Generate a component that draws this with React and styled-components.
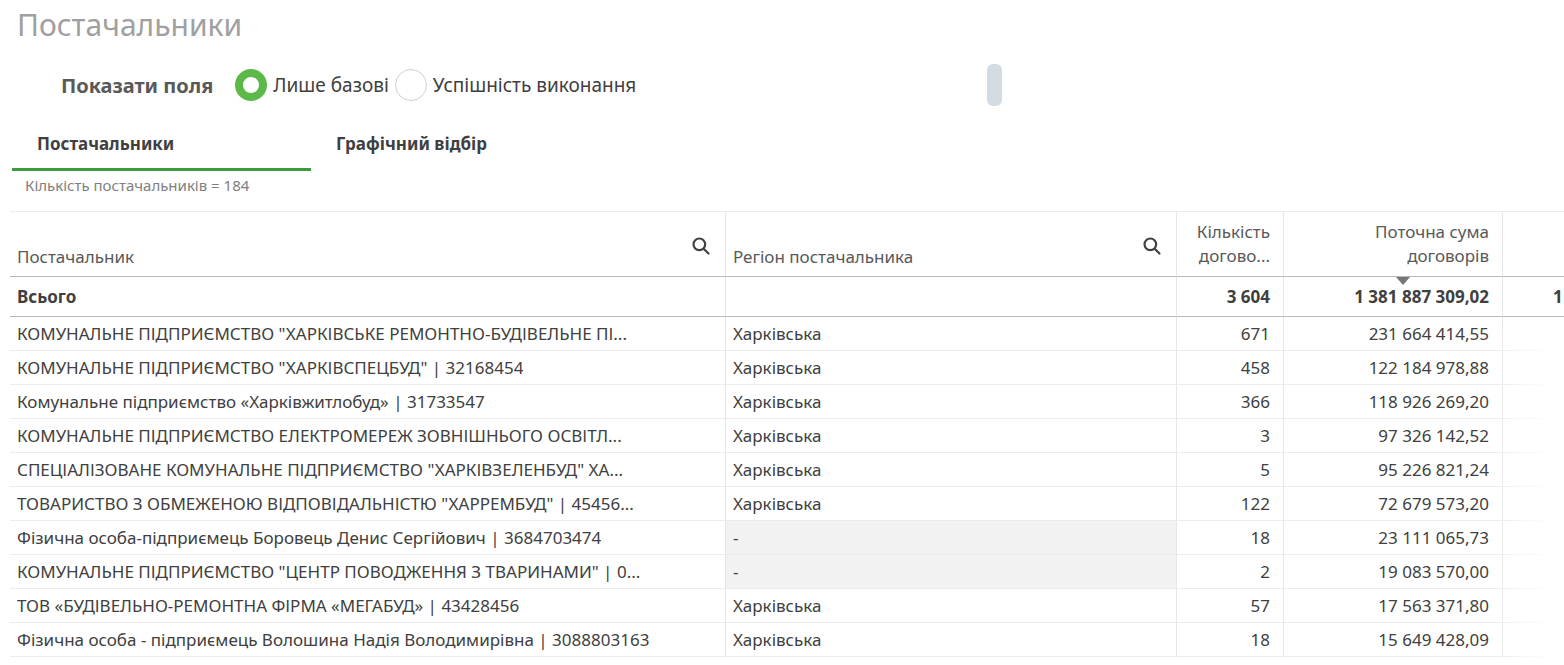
import React from "react";
import styled, { createGlobalStyle } from "styled-components";

const Global = createGlobalStyle`
  body { margin: 0; background: #fff; font-family: "Noto Sans", "Open Sans", sans-serif; color: #404040; overflow: hidden; }
`;

const Page = styled.div`
  width: 1564px;
  height: 665px;
  overflow: hidden;
  position: relative;
`;

const Title = styled.h1`
  margin: 0;
  padding: 4px 0 0 17px;
  font-size: 30px;
  font-weight: 400;
  color: #a0a0a0;
  height: 42px;
`;

const FilterRow = styled.div`
  display: flex;
  align-items: center;
  padding: 18px 0 0 61px;
  height: 42px;
`;

const FilterLabel = styled.span`
  font-size: 20px;
  font-weight: 700;
  color: #595959;
  margin-right: 22px;
`;

const Radio = styled.span`
  width: 32px;
  height: 32px;
  box-sizing: border-box;
  border-radius: 50%;
  border: ${(p) => (p.$on ? "8px solid #5cb848" : "1px solid #d0d0d0")};
  background: #fff;
  margin-right: 6px;
`;

const RadioText = styled.span`
  font-size: 19px;
  color: #404040;
  margin-right: 6px;
`;

const Scroll = styled.span`
  width: 15px;
  height: 42px;
  border-radius: 6px;
  background: #d2dce2;
  margin-left: 345px;
`;

const Tabs = styled.div`
  display: flex;
  margin: 14px 0 0 12px;
`;

const Tab = styled.div`
  width: 299px;
  height: 51px;
  box-sizing: border-box;
  padding: 12px 0 0 25px;
  font-size: 17px;
  font-weight: 700;
  color: #404040;
  border-bottom: 3px solid ${(p) => (p.$active ? "#3e9b3e" : "transparent")};
`;

const Caption = styled.div`
  font-size: 15px;
  color: #808080;
  padding: 4px 0 0 25px;
  height: 40px;
  box-sizing: border-box;
`;

const Table = styled.div`
  margin-left: 10px;
  border-top: 1px solid #ececec;
  display: grid;
  grid-template-columns: 715px 451px 107px 219px 80px;
`;

const Cell = styled.div`
  box-sizing: border-box;
  height: ${(p) => p.$h || 34}px;
  padding: 0 ${(p) => (p.$num ? 13 : 7)}px;
  display: flex;
  align-items: ${(p) => (p.$head ? "flex-end" : "center")};
  justify-content: ${(p) => (p.$num ? "flex-end" : "flex-start")};
  text-align: ${(p) => (p.$num ? "right" : "left")};
  border-left: ${(p) => (p.$first ? "none" : "1px solid #e6e6e6")};
  border-bottom: 1px solid ${(p) => (p.$dark ? "#b8b8b8" : "#ececec")};
  background: ${(p) => (p.$grey ? "#f2f2f2" : "transparent")};
  font-size: 17px;
  font-weight: ${(p) => (p.$bold ? 700 : 400)};
  color: ${(p) => (p.$head ? "#595959" : "#404040")};
  font-variant-numeric: tabular-nums;
  position: relative;
  overflow: hidden;
`;

const Clip = styled.span`
  white-space: nowrap;
  overflow: hidden;
  text-overflow: ellipsis;
  padding-bottom: ${(p) => (p.$head ? 8 : 0)}px;
`;

const HeadWrap = styled.span`
  line-height: 24px;
  padding-bottom: 8px;
`;

const SearchIcon = styled.svg`
  position: absolute;
  right: 14px;
  top: 24px;
`;

const SortMark = styled.span`
  position: absolute;
  top: 0;
  left: 112px;
  width: 0;
  height: 0;
  border-left: 7px solid transparent;
  border-right: 7px solid transparent;
  border-top: 8px solid #777;
`;

const Fade = styled.div`
  position: absolute;
  right: 0;
  top: 330px;
  width: 70px;
  height: 340px;
  background: linear-gradient(to right, rgba(255,255,255,0), #fff 80%);
`;

const Search = () => (
  <SearchIcon width="20" height="20" viewBox="0 0 24 24" fill="none" stroke="#404040" strokeWidth="2.6" strokeLinecap="round">
    <circle cx="10" cy="10" r="7" />
    <line x1="15.5" y1="15.5" x2="21" y2="21" />
  </SearchIcon>
);

const rows = [
  ['КОМУНАЛЬНЕ ПІДПРИЄМСТВО "ХАРКІВСЬКЕ РЕМОНТНО-БУДІВЕЛЬНЕ ПІ...', "Харківська", "671", "231 664 414,55"],
  ['КОМУНАЛЬНЕ ПІДПРИЄМСТВО "ХАРКІВСПЕЦБУД" | 32168454', "Харківська", "458", "122 184 978,88"],
  ["Комунальне підприємство «Харківжитлобуд» | 31733547", "Харківська", "366", "118 926 269,20"],
  ["КОМУНАЛЬНЕ ПІДПРИЄМСТВО ЕЛЕКТРОМЕРЕЖ ЗОВНІШНЬОГО ОСВІТЛ...", "Харківська", "3", "97 326 142,52"],
  ['СПЕЦІАЛІЗОВАНЕ КОМУНАЛЬНЕ ПІДПРИЄМСТВО "ХАРКІВЗЕЛЕНБУД" ХА...', "Харківська", "5", "95 226 821,24"],
  ['ТОВАРИСТВО З ОБМЕЖЕНОЮ ВІДПОВІДАЛЬНІСТЮ "ХАРРЕМБУД" | 45456...', "Харківська", "122", "72 679 573,20"],
  ["Фізична особа-підприємець Боровець Денис Сергійович | 3684703474", "-", "18", "23 111 065,73"],
  ['КОМУНАЛЬНЕ ПІДПРИЄМСТВО "ЦЕНТР ПОВОДЖЕННЯ З ТВАРИНАМИ" | 0...', "-", "2", "19 083 570,00"],
  ["ТОВ «БУДІВЕЛЬНО-РЕМОНТНА ФІРМА «МЕГАБУД» | 43428456", "Харківська", "57", "17 563 371,80"],
  ["Фізична особа - підприємець Волошина Надія Володимирівна | 3088803163", "Харківська", "18", "15 649 428,09"],
];

export default function App() {
  return (
    <Page>
      <Global />
      <Title>Постачальники</Title>
      <FilterRow>
        <FilterLabel>Показати поля</FilterLabel>
        <Radio $on />
        <RadioText>Лише базові</RadioText>
        <Radio />
        <RadioText>Успішність виконання</RadioText>
        <Scroll />
      </FilterRow>
      <Tabs>
        <Tab $active>Постачальники</Tab>
        <Tab>Графічний відбір</Tab>
      </Tabs>
      <Caption>Кількість постачальників = 184</Caption>
      <Table>
        <Cell $head $first $h={65} $dark><Clip $head>Постачальник</Clip><Search /></Cell>
        <Cell $head $h={65} $dark><Clip $head>Регіон постачальника</Clip><Search /></Cell>
        <Cell $head $num $h={65} $dark><HeadWrap>Кількість<br />догово...</HeadWrap></Cell>
        <Cell $head $num $h={65} $dark><HeadWrap>Поточна сума<br />договорів</HeadWrap></Cell>
        <Cell $head $h={65} $dark />
        <Cell $first $bold $h={40} $dark>Всього</Cell>
        <Cell $h={40} $dark />
        <Cell $num $bold $h={40} $dark>3 604</Cell>
        <Cell $num $bold $h={40} $dark><SortMark />1 381 887 309,02</Cell>
        <Cell $bold $h={40} $dark style={{ paddingLeft: 50 }}>1</Cell>
        {rows.map((r, i) => (
          <React.Fragment key={i}>
            <Cell $first><Clip>{r[0]}</Clip></Cell>
            <Cell $grey={r[1] === "-"}>{r[1]}</Cell>
            <Cell $num>{r[2]}</Cell>
            <Cell $num>{r[3]}</Cell>
            <Cell />
          </React.Fragment>
        ))}
      </Table>
      <Fade />
    </Page>
  );
}
